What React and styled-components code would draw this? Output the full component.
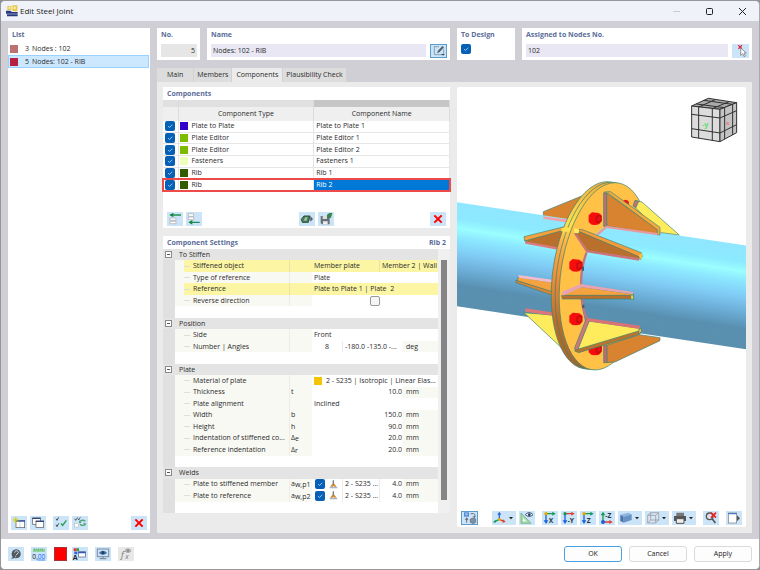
import React from "react";
import styled, { createGlobalStyle, css } from "styled-components";

const GlobalStyle = createGlobalStyle`
  * { box-sizing: border-box; }
  html, body { margin: 0; background: #8f8f94; }
  body, button, input, select, table {
    font-family: "Open Sans", "Noto Sans", sans-serif;
    font-size: 7px;
    line-height: 10px;
    color: #2b2b2b;
  }
  button { padding: 0; border: 0; background: none; }
`;

const Window = styled.div`
  min-height: 100vh;
  display: flex;
  flex-direction: column;
  border: 1px solid #96969b;
  border-right-color: #aaa9af;
  border-radius: 5px;
  background: #d0cfd5;
  overflow: hidden;
`;
const TitleBar = styled.header`
  display: flex;
  align-items: center;
  height: 20px;
  padding: 0 12px 0 5px;
  gap: 2px;
  background: #eff3f9;
`;
const Title = styled.h1`
  flex: 1;
  margin: 0;
  font-size: 8px;
  font-weight: 400;
  color: #222;
`;
const WindowButtons = styled.div`
  display: flex;
  gap: 24px;
  button { width: 9px; height: 9px; display: flex; }
`;
const Body = styled.main`
  flex: 1;
  display: grid;
  grid-template-columns: minmax(0, 142fr) minmax(0, 595fr);
  gap: 7px;
  padding: 7px 7px 6px;
`;
const Card = styled.section`
  background: #fff;
  min-width: 0;
`;
const Heading = styled.h2`
  margin: 0;
  display: flex;
  justify-content: space-between;
  font-size: 7px;
  line-height: 13px;
  font-weight: 700;
  color: #5b6d98;
  padding: 0 4px;
`;
const ListCard = styled(Card)`
  display: flex;
  flex-direction: column;
`;
const List = styled.ul`
  list-style: none;
  margin: 0;
  padding: 1px 1px 0 0;
  flex: 1;
`;
const ListItem = styled.button`
  display: grid;
  grid-template-columns: 8px 8px 1fr;
  align-items: center;
  width: 100%;
  height: 13px;
  padding: 0 1px;
  gap: 3px;
  text-align: left;
  border: 1px solid transparent;
  ${(p) => p.$selected && css`background: #cce8ff; border-color: #99d1ff;`}
`;
const ListNumber = styled.span`
  text-align: right;
`;
const Swatch = styled.span`
  display: inline-block;
  flex: none;
  width: 8px;
  height: 8px;
  background: ${(p) => p.$color};
`;
const Tools = styled.div`
  display: flex;
  align-items: center;
  gap: 3px;
  padding: ${(p) => p.$pad || "3px"};
`;
const Spacer = styled.span`
  flex: ${(p) => (p.$width ? `0 0 ${p.$width}px` : 1)};
`;
const IconButton = styled.button`
  flex: none;
  width: ${(p) => p.$width || 16}px;
  height: 14px;
  display: flex;
  align-items: center;
  justify-content: center;
  background: ${(p) => (p.$disabled ? "#e8e8e8" : "#cce4f7")};
  border: ${(p) => (p.$framed ? "1px solid #5c9ccc" : "0")};
  svg { display: block; width: 16px; height: 14px; flex: none; }
  svg + svg { width: 8px; }
`;
const ColorButton = styled.button`
  width: 13px;
  height: 14px;
  background: #f00;
  border: 1px solid #a33;
`;
const Main = styled.div`
  display: flex;
  flex-direction: column;
  min-width: 0;
`;
const TopRow = styled.div`
  display: grid;
  grid-template-columns: 43px minmax(0, 243fr) 58px minmax(0, 230fr);
  gap: 7px;
`;
const FieldCard = styled(Card)`
  height: 32px;
`;
const FieldRow = styled.div`
  display: flex;
  gap: 4px;
  padding: 3px 3px 0 4px;
`;
const TextField = styled.input`
  flex: 1;
  width: 0;
  min-width: 0;
  height: 13px;
  border: 0;
  padding: 0 2px;
  outline: 0;
  background: ${(p) => (p.readOnly ? "#e6e6e6" : "#e8e7f3")};
  text-align: ${(p) => (p.readOnly ? "right" : "left")};
`;
const Check = styled.input.attrs({ type: "checkbox" })`
  appearance: none;
  flex: none;
  display: block;
  margin: 0;
  width: 10px;
  height: 10px;
  border-radius: 2px;
  border: 1px solid #999;
  background: #f5f5f5;
  &:checked {
    border: 0;
    background: #0560b6 url("data:image/svg+xml,%3Csvg xmlns='http://www.w3.org/2000/svg' viewBox='0 0 10 10'%3E%3Cpath d='M3 5l1.5 1.5L7.2 3.7' fill='none' stroke='%23b8dcff' stroke-width='.8'/%3E%3C/svg%3E");
  }
`;
const Tabs = styled.nav`
  display: flex;
  margin-top: 8px;
`;
const Tab = styled.button`
  height: 14px;
  padding: 0 ${(p) => p.$pad}px;
  background: ${(p) => (p.$active ? "#ebebeb" : "#dddddd")};
  border-right: 1px solid #d2d2d4;
`;
const TabPanel = styled.div`
  flex: 1;
  display: grid;
  grid-template-columns: minmax(0, 287fr) minmax(0, 289fr);
  gap: 7px;
  padding: 5px 6px 6px;
  background: #ebebeb;
`;
const Column = styled.div`
  display: flex;
  flex-direction: column;
  gap: 8px;
  padding-bottom: 14px;
  min-width: 0;
`;
const ComponentTable = styled.table`
  width: 100%;
  height: 91px;
  table-layout: fixed;
  border-collapse: collapse;
  th { background: #efefef; font-weight: 400; height: 14px; padding: 0; border-right: 1px solid #dcdcdc; }
  td { padding: 0 1px; border-bottom: 1px solid #e6e6e6; border-right: 1px solid #e6e6e6; }
  td:first-child, td:last-child { padding-left: 2px; }
  td:nth-child(2) > span { vertical-align: middle; margin-right: 4px; }
`;
const TableStrip = styled.tr`
  th { height: 7px; background: #e0e0e0; }
  th:last-child { background: #c6c6c6; }
`;
const TableRow = styled.tr`
  ${(p) => p.$selected && css`
    outline: 2px solid #ef4a4a;
    outline-offset: -1px;
    td:last-child { background: #0078d7; color: #fff; }
  `}
`;
const SettingsCard = styled(Card)`
  flex: 1;
  display: flex;
  flex-direction: column;
`;
const SettingsBody = styled.div`
  flex: 1;
  display: grid;
  grid-template-columns: minmax(0, 1fr) 12px;
`;
const SettingsTree = styled.div`
  display: flex;
  flex-direction: column;
`;
const Group = styled.div`
  flex: ${(p) => p.$rows} 0 0px;
  display: grid;
  grid-template-columns: 12px minmax(0, 1fr);
  grid-template-rows: repeat(${(p) => p.$rows}, minmax(11px, 1fr));
  background: linear-gradient(90deg, #e0e0e0 12px, #fff 12px);
`;
const GroupTitle = styled.div`
  grid-column: 1 / 3;
  display: flex;
  align-items: center;
  gap: 7px;
  padding-left: 2px;
  background: #e4e4e4;
`;
const Toggle = styled.button`
  width: 7px;
  height: 7px;
  display: flex;
  align-items: center;
  justify-content: center;
  background: #fff;
  border: 1px solid #8a8a8a;
  &::before { content: ""; width: 3px; height: 1px; background: #555; }
`;
const SettingRow = styled.div`
  grid-column: 2;
  display: grid;
  grid-template-columns: 9px minmax(0, 105fr) 23px minmax(0, 126fr);
  align-items: stretch;
  background: #f9f9f4;
  white-space: nowrap;
`;
const Cell = styled.div`
  display: flex;
  align-items: center;
  min-width: 0;
  overflow: hidden;
  background: ${(p) => (p.$hot ? "#fbf5a4" : p.$white ? "#fff" : "#f9f9f4")};
  padding-left: ${(p) => p.$pad || 0}px;
  border-left: ${(p) => (p.$rule ? `1px solid ${p.$hot ? "#e9e4a4" : "#ececea"}` : "0")};
  flex: ${(p) => (p.$width ? `0 0 ${p.$width}px` : 1)};
  justify-content: ${(p) => p.$align || "flex-start"};
`;
const Branch = styled.span`
  width: 6px;
  height: 1px;
  margin-right: 3px;
  background: #dededa;
`;
const Subscript = styled.sub`
  font-size: 7px;
  line-height: 7px;
  padding-top: 1px;
`;
const ValueInput = styled.input`
  width: 100%;
  min-width: 0;
  height: 10px;
  border: 0;
  outline: 0;
  padding: 0;
  background: transparent;
  text-align: ${(p) => p.$align || "left"};
  text-overflow: ellipsis;
`;
const ValueSelect = styled.select`
  appearance: none;
  border: 0;
  padding: 0;
  width: 100%;
  height: 10px;
  background: transparent;
`;
const ScrollTrack = styled.div`
  display: flex;
  justify-content: center;
  padding: 11px 3px 13px;
  background: #f0f0f0;
`;
const ScrollThumb = styled.div`
  flex: 1;
  background: #868686;
`;
const ViewCard = styled(Card)`
  display: flex;
  flex-direction: column;
  border-radius: 2px;
`;
const Canvas = styled.div`
  flex: 1;
  min-height: 300px;
  display: grid;
  svg { width: 100%; height: 100%; display: block; }
`;
const Footer = styled.footer`
  display: flex;
  align-items: center;
  gap: 7px;
  height: 30px;
  padding: 0 7px;
  background: #fff;
`;
const FooterPair = styled.div`
  display: flex;
  gap: 5px;
`;
const DialogButton = styled.button`
  width: 58px;
  height: 16px;
  border-radius: 3px;
  background: #fdfdfd;
  border: 1px solid ${(p) => (p.$primary ? "#4a9fe0" : "#dadada")};
  color: #222;
`;

/* Toolbar glyphs, drawn on a 48 x 42 grid */
const drawings = {
  newItem: <><rect x="15" y="13" width="26" height="22" fill="#fff" stroke="#555" strokeWidth="2" /><path d="M14 15h28" stroke="#3857a8" strokeWidth="5" /><path d="M27 13v22" stroke="#888" /><path d="M14 3v18M5 12h18M8 6l12 12M20 6L8 18" stroke="#d5cf00" strokeWidth="2.5" /></>,
  copyItem: <><rect x="8" y="6" width="23" height="19" fill="#fff" stroke="#555" strokeWidth="2" /><path d="M7 7h25" stroke="#33447f" strokeWidth="4" /><rect x="18" y="15" width="23" height="19" fill="#fff" stroke="#555" strokeWidth="2" /><path d="M17 16h25" stroke="#33447f" strokeWidth="4" /></>,
  checks: <><path d="M9 8l3 5 5-9M9 26l3 6 5-10" fill="none" stroke="#333" strokeWidth="2.5" /><path d="M24 22l5 6 11-15" fill="none" stroke="#20a052" strokeWidth="4" /></>,
  swap: <><path d="M8 8l3 5 6-9M18 8l2 4 5-8" fill="none" stroke="#444" strokeWidth="2.5" /><rect x="8" y="22" width="11" height="11" fill="#fff" stroke="#999" /><path d="M40 16c-6-5-13-4-16 1M24 25c5 5 12 4 15 0" fill="none" stroke="#4fa374" strokeWidth="4" /><path d="M21 13v8h8zM41 29v-8h-8z" fill="#4fa374" /></>,
  remove: <path d="M13 10l22 22M35 10L13 32" stroke="#f00" strokeWidth="6" />,
  help: <><path d="M14 30l-5 6 10-3c14 3 22-5 18-17C34 4 17 4 12 15c-2 6-1 11 2 15z" fill="#53585f" /><path d="M20 17c0-8 12-7 11 0-1 4-6 4-7 8M23 28v3" fill="none" stroke="#cce4f7" strokeWidth="3" /></>,
  units: <><path d="M6 5h36v10H6z" fill="#8fd39b" /><path d="M10 5v6M16 5v4M22 5v6M28 5v4M34 5v6" stroke="#4b9c61" strokeWidth="2" /><text x="4" y="35" fontSize="20" fill="#222">0,</text><text x="20" y="35" fontSize="20" fill="#1769ff">00</text><path d="M20 39h22" stroke="#1769ff" strokeWidth="2" /></>,
  colors: <><path d="M5 4h9v9H5z" fill="#e33" /><path d="M14 4h7v9h-7z" fill="#27a047" /><path d="M7 14h9v8H7z" fill="#2d60e8" /><text x="2" y="39" fontSize="21" fontWeight="700" fill="#222">A</text><rect x="20" y="15" width="20" height="15" fill="#fff" stroke="#557" strokeWidth="2" /><path d="M19 16h22" stroke="#3857a8" strokeWidth="5" /></>,
  view: <><rect x="7" y="6" width="34" height="23" fill="#cfe0f2" stroke="#7b8da4" strokeWidth="3" /><path d="M14 35h20M24 29v6" stroke="#7b8da4" strokeWidth="4" /><path d="M12 18c7-9 16-9 24 0-8 7-17 7-24 0z" fill="#426fa1" /><circle cx="24" cy="17" r="4" fill="#173c66" /></>,
  formula: <><text x="9" y="32" fontSize="27" fontStyle="italic" fill="#777">f</text><text x="22" y="36" fontSize="21" fontStyle="italic" fill="#777">x</text><ellipse cx="30" cy="11" rx="8" ry="5" fill="#ccc" stroke="#777" strokeWidth="2" /><circle cx="30" cy="11" r="3" fill="#777" /></>,
  edit: <><path d="M10 8h14M10 7v25h28M38 14v18" fill="none" stroke="#61809d" strokeWidth="2" /><path d="M18 28l3-8L34 6l5 4-14 15z" fill="#555e67" /><path d="M32 32h8" stroke="#333" strokeWidth="3" /></>,
  pick: <><path d="M16 4l11 10M27 4L16 14" stroke="#df2d39" strokeWidth="4" /><path d="M23 12v22l6-5 4 9 4-2-4-9h7z" fill="#fff" stroke="#666" strokeWidth="2" /></>,
  insertAbove: <><path d="M11 9h31" stroke="#209050" strokeWidth="4" /><path d="M7 9l12-7v14z" fill="#168440" /><path d="M9 18h18v7H9zM9 28h18v7H9z" fill="#fff" stroke="#aaa" strokeWidth="2" /></>,
  insertBelow: <><path d="M7 5h16v8H7zM7 15h16v8H7z" fill="#fff" stroke="#aaa" strokeWidth="2" /><path d="M12 31h29" stroke="#209050" strokeWidth="4" /><path d="M7 31l12-7v14z" fill="#168440" /></>,
  library: <><path d="M7 22l8-10h18l-5 19H10z" fill="#4f7c5d" stroke="#294e38" strokeWidth="3" /><path d="M14 25l5-9h7l-4 11z" fill="#9bc6a4" /><path d="M34 13v16l8-8z" fill="#4e5961" /></>,
  save: <><path d="M8 12h27v25H12l-4-4z" fill="#68717a" /><path d="M14 12h13v9H14z" fill="#ddd" /><path d="M15 28h14v9H15z" fill="#eee" /><path d="M27 8l7-5h9l-4 14-11 2z" fill="#39814d" /></>,
  sync: <><rect x="6" y="4" width="15" height="13" fill="#5187d6" /><path d="M10 7h7v6h-7z" fill="#a9c8f0" /><path d="M14 22v13M26 8h9c5 2 5 6 2 10" fill="none" stroke="#666f7d" strokeWidth="3" /><path d="M8 26l6-7 6 7zM32 16l5 6 5-6z" fill="#666f7d" /><path d="M25 24l8-3 8 3v10l-8 4-8-4z" fill="#8090a6" stroke="#5d6878" strokeWidth="2" /></>,
  axes: <><path d="M22 25V8" stroke="#2864df" strokeWidth="4" /><path d="M22 25L8 32" stroke="#15a050" strokeWidth="4" /><path d="M22 25l14 6" stroke="#e24229" strokeWidth="4" /><path d="M16 11l6-9 6 9z" fill="#2864df" /><path d="M11 26v9l-8-1z" fill="#17945b" /><path d="M34 25l7 8-10 2z" fill="#e24229" /><circle cx="22" cy="25" r="4" fill="#e1b500" /></>,
  measure: <><path d="M6 6v31h30z" fill="#a9dbab" stroke="#5aa773" strokeWidth="2" /><path d="M12 21v10h10z" fill="#fff" /><path d="M19 11c7-8 16-8 23 0-7 7-16 7-23 0z" fill="#fff" stroke="#334d78" strokeWidth="3" /><circle cx="31" cy="11" r="4" fill="#26375c" /></>,
  cubeBlue: <><path d="M7 11l24-6 10 5-24 7z" fill="#8fb5df" /><path d="M7 11l10 6v18L7 30z" fill="#4a75ab" /><path d="M17 17l24-7v17l-24 8z" fill="#6a92c4" /></>,
  wire: <path d="M8 13l9-8h24v22l-9 9H8zM8 13h24v23M32 13l9-8M17 5v22h24M17 27l-9 9" fill="#dce5ef" stroke="#8791a0" strokeWidth="2" />,
  print: <><path d="M13 5h23v10H13z" fill="#777" /><path d="M6 15h36v15H6z" fill="#555" /><path d="M13 23h23v14H13z" fill="#eee" stroke="#555" strokeWidth="3" /></>,
  find: <><circle cx="20" cy="16" r="10" fill="#d9e2ea" stroke="#555" strokeWidth="4" /><path d="M28 24l9 12" stroke="#555" strokeWidth="5" /><path d="M24 5l15 15M39 5L24 20" stroke="#e22" strokeWidth="5" /></>,
  panel: <><rect x="7" y="6" width="25" height="30" fill="#fff" stroke="#777" strokeWidth="2" /><path d="M7 8h25" stroke="#4879c5" strokeWidth="4" /><path d="M33 13v18l9-9z" fill="#555" /></>,
};
const axisView = (letter, horizontal, vertical, origin) => (
  <>
    <path d="M12 8v24" stroke={vertical} strokeWidth="4" />
    <path d="M12 8h21" stroke={horizontal} strokeWidth="4" />
    <path d="M31 2l10 6-10 6z" fill={horizontal} />
    <path d="M5 28l7 11 7-11z" fill={vertical} />
    <circle cx="12" cy="8" r="5" fill={origin} />
    <text x="20" y="35" fontSize="20" fontWeight="700" fill="#263541">{letter}</text>
  </>
);
drawings.viewX = axisView("X", "#169856", "#1764dc", "#e5a800");
drawings.viewY = axisView("-Y", "#e33b32", "#1764dc", "#169856");
drawings.viewZ = axisView("Z", "#169856", "#1764dc", "#e5a800");
drawings.viewMinusZ = <>
  <path d="M12 9v24" stroke="#169856" strokeWidth="4" />
  <path d="M12 33h20" stroke="#e33b32" strokeWidth="4" />
  <path d="M5 13l7-11 7 11z" fill="#169856" /><path d="M31 27l10 6-10 6z" fill="#e33b32" /><circle cx="12" cy="33" r="6" fill="#1764dc" />
  <text x="19" y="22" fontSize="20" fontWeight="700" fill="#263541">-Z</text>
</>;

function Tool({ icon, label, menu, width, framed, disabled }) {
  return (
    <IconButton type="button" aria-label={label} $width={menu ? 24 : width} $framed={framed} $disabled={disabled}>
      <svg viewBox="0 0 48 42">{drawings[icon]}</svg>
      {menu && <svg viewBox="0 0 24 42"><path d="M3 18h12l-6 7z" fill="#222" /></svg>}
    </IconButton>
  );
}

function Bolt({ x, y }) {
  return (
    <g transform={`translate(${x} ${y})`}>
      <path d="M-19-10l10-9 20 2 9 7v18l-8 9-10 2-12-1-9-8z" fill="#f80d0d" />
      <path d="M2-6l9-6 9 4v15l-8 7-10-2z" fill="#cc0b0b" />
      <path d="M7-3l6-4 4 3v8l-5 4-5-2z" fill="#e81515" />
    </g>
  );
}

function Model() {
  const edge = { stroke: "#3a8274", strokeWidth: 2, strokeLinejoin: "round" };
  const disc = (dx) => `matrix(134 0 -30 281 ${450 + dx} ${319 + dx / 8})`;
  return (
    <svg viewBox="457 87 289 424" preserveAspectRatio="xMidYMid slice" role="img" aria-label="Steel joint model">
      <defs>
        <linearGradient id="pipe" gradientUnits="userSpaceOnUse" x1="440" y1="162" x2="394" y2="466">
          <stop offset="0" stopColor="#8fe6ff" />
          <stop offset=".16" stopColor="#8ceaff" />
          <stop offset=".25" stopColor="#9bfeff" />
          <stop offset=".34" stopColor="#8ce8ff" />
          <stop offset=".5" stopColor="#7fcaf5" />
          <stop offset=".66" stopColor="#6aabd4" />
          <stop offset=".8" stopColor="#5990b1" />
          <stop offset="1" stopColor="#5a8fae" />
        </linearGradient>
        <linearGradient id="rim" x1="0" y1="0" x2="0" y2="1">
          <stop offset="0" stopColor="#f2ad3d" />
          <stop offset=".22" stopColor="#ffe04e" />
          <stop offset=".32" stopColor="#ffb347" />
          <stop offset=".5" stopColor="#ee9038" />
          <stop offset=".75" stopColor="#b96d2a" />
          <stop offset="1" stopColor="#a8652a" />
        </linearGradient>
      </defs>
      <g transform="translate(455 170) scale(.3333)">
        <path d="M265 125L400 70 360 155 265 141z" fill="#d78330" {...edge} />
        <path d="M6 97L480 168V480L6 409z" fill="url(#pipe)" />
        <path d="M265 139l80 11v9l-80-13z" fill="#f3a0a8" />
        <path d="M210 212l120-34-20 58-98-21z" fill="#b9702c" {...edge} />
        <path d="M207 200l122-30v10l-120 33z" fill="#f8a13b" {...edge} />
        <path d="M210 214l98 18v7l-97-18z" fill="#dd7a7c" />
        <path d="M190 321l108 17v32l-112-38z" fill="#f5a33e" {...edge} />
        <path d="M183 331l112 35v11l-112-39z" fill="#dc8533" {...edge} />
        <path d="M190 315l108 15v9l-106-16z" fill="#f1bccd" />
        <path d="M207 428l94 8 34 112z" fill="#ffec5c" {...edge} />
        <path d="M211 415l88 13v10l-88-13z" fill="#db777b" />
        {[-24, -12].map((dx) => (
          <circle key={dx} r="1" transform={disc(dx)} fill="url(#rim)" stroke="#3a8274" strokeWidth="1" vectorEffect="non-scaling-stroke" strokeOpacity=".7" />
        ))}
        <circle r="1" transform={disc(0)} fill="#ffc247" stroke="#3a8274" strokeWidth="1" vectorEffect="non-scaling-stroke" strokeOpacity=".7" />
        <path d="M320 175l12-4 16 3-6 12-24-2z" fill="#ffe04e" />
        <path d="M502 95q10-11 20 0l-1 9z" fill="#f21818" />
        <path d="M420 193l36-29L874 227V538L395 466C384 440 378 400 378 350s10-98 42-157z" fill="url(#pipe)" />
        <path d="M395 247c-12 30-17 65-17 98M380 385c2 28 8 46 17 65" fill="none" stroke="#c2757c" strokeWidth="7" />
        <path d="M384 290v12M385 404v10" stroke="#3a5c70" strokeWidth="6" />
        <path d="M543 93l18 3 112 99-55-7-78-76z" fill="#ffec5c" {...edge} />
        <path d="M540 91l11 3-8 19-9-5z" fill="#c1737a" {...edge} />
        <Bolt x={420} y={146} />
        <path d="M452 68l156 109 1 16-154-25z" fill="#d78330" {...edge} />
        <path d="M447 66l20-1 148 107v23l-8-1v-15L460 70h-12z" fill="#f6aa3d" {...edge} />
        <path d="M446 69h9v101l-9-1z" fill="#b8737c" {...edge} />
        <path d="M454 167l154 22v7l-153-22-25 22-8-3z" fill="#e9989c" />
        <path d="M360 191l22-6 174 75-3 7-156-24z" fill="#b9702c" {...edge} />
        <path d="M367 179l13-1 179 70 3 11-6 10-4-9-174-73z" fill="#f59b3a" {...edge} />
        <path d="M552 255l10-6-1 13-6 7z" fill="#f5c43e" />
        <path d="M356 190l8 1 35 50 153 23v8l-158-25z" fill="#cc747b" />
        <path d="M357 175l15 3-1 12-13-1z" fill="#ffec5c" />
        <path d="M325 373l53-23 157 22v6H325z" fill="#f5a33e" {...edge} />
        <path d="M320 376h215v11H322z" fill="#b9702c" {...edge} />
        <path d="M527 375h9v13h-9z" fill="#f5cb45" {...edge} />
        <path d="M321 365l56-23 157 24v7l-154-21-57 25z" fill="#e8a3b0" />
        <Bolt x={362} y={286} />
        <Bolt x={362} y={447} />
        <Bolt x={420} y={537} />
        <path d="M455 526l98-32 62 9v9L480 576l-25 2z" fill="#d78330" {...edge} />
        <path d="M446 527h10v51h-10z" fill="#b96e75" {...edge} />
        <path d="M363 536l192-60 4 8-5 9-183 55-12-5z" fill="#ba742d" {...edge} />
        <path d="M400 453l154 22-3 8-183 55z" fill="#ffec5c" {...edge} />
        <path d="M394 445l9 8-35 87-10-4z" fill="#cf787b" {...edge} />
        <path d="M394 443l161 24-1 10-154-23z" fill="#d87478" />
        <path d="M551 482l9-9-1 11-6 8z" fill="#f5cb45" {...edge} />
      </g>
      <g transform="translate(450 0) scale(.3333)" stroke="#303030" strokeWidth="3" strokeLinejoin="round">
        <path d="M725 318l50-23 85 13-50 20z" fill="#aaa" />
        <path d="M725 318l85 10v97l-85-14z" fill="#dcdcdc" />
        <path d="M810 328l50-20v90l-50 27z" fill="#c4c4c4" />
        <path d="M725 343l85 11 50-22M725 386l85 13 50-25M746 321v94M787 326v96M824 322v95M848 313v92M739 312l84 11M761 301l86 12M746 321l50-22M787 326l50-21" fill="none" />
        <text x="756" y="382" fontSize="22" fontWeight="700" fill="#5fe070" stroke="none">-y</text>
        <text x="828" y="375" fontSize="18" fontWeight="700" fill="#e77b7b" stroke="none">x</text>
      </g>
    </svg>
  );
}

const components = [
  ["Plate to Plate", "Plate to Plate 1", "#3300cc"],
  ["Plate Editor", "Plate Editor 1", "#7dbb00"],
  ["Plate Editor", "Plate Editor 2", "#7dbb00"],
  ["Fasteners", "Fasteners 1", "#eeffbb"],
  ["Rib", "Rib 1", "#335c00"],
  ["Rib", "Rib 2", "#335c00"],
];

const groups = [
  { title: "To Stiffen", rows: [
    { label: "Stiffened object", hot: true, text: "Member plate", extra: "Member 2 | Wall" },
    { label: "Type of reference", select: "Plate" },
    { label: "Reference", hot: true, text: "Plate to Plate 1 | Plate  2" },
    { label: "Reverse direction", check: true },
  ] },
  { title: "Position", rows: [
    { label: "Side", select: "Front" },
    { label: "Number | Angles", count: "8", angles: "-180.0 -135.0 -...", unit: "deg" },
  ] },
  { title: "Plate", rows: [
    { label: "Material of plate", color: "#f5c400", text: "2 - S235 | Isotropic | Linear Elast..." },
    { label: "Thickness", symbol: "t", number: "10.0", unit: "mm" },
    { label: "Plate alignment", select: "Inclined" },
    { label: "Width", symbol: "b", number: "150.0", unit: "mm" },
    { label: "Height", symbol: "h", number: "90.0", unit: "mm" },
    { label: "Indentation of stiffened co...", symbol: "Δ", sub: "e", number: "20.0", unit: "mm" },
    { label: "Reference indentation", symbol: "Δ", sub: "r", number: "20.0", unit: "mm" },
  ] },
  { title: "Welds", rows: [
    { label: "Plate to stiffened member", symbol: "a", sub: "w,p1", weld: "2 - S235 ...", number: "4.0", unit: "mm" },
    { label: "Plate to reference", symbol: "a", sub: "w,p2", weld: "2 - S235 ...", number: "4.0", unit: "mm" },
  ] },
];

const Values = styled.div`
  display: flex;
  min-width: 0;
`;
const WeldIcon = styled.svg`
  width: 9px;
  height: 9px;
  margin-left: 4px;
`;

function Value({ row }) {
  const { label, hot } = row;
  return (
    <Values>
      {row.text && (
        <Cell $white $hot={hot} $pad={2}>
          {row.color && <><Swatch $color={row.color} /><Spacer $width={4} /></>}
          <ValueInput aria-label={label} defaultValue={row.text} />
        </Cell>
      )}
      {row.extra && <Cell $hot={hot} $rule $pad={2} $width={59}><ValueInput aria-label={`${label} detail`} defaultValue={row.extra} /></Cell>}
      {row.select && <Cell $white $pad={2}><ValueSelect aria-label={label}><option>{row.select}</option></ValueSelect></Cell>}
      {row.check && <Cell $white $align="center"><Check aria-label={label} /></Cell>}
      {row.count && <Cell $white $width={30}><ValueInput $align="center" aria-label="Number" defaultValue={row.count} /></Cell>}
      {row.angles && <Cell $white $rule $pad={2}><ValueInput aria-label="Angles" defaultValue={row.angles} /></Cell>}
      {row.weld && (
        <>
          <Cell $white $pad={3} $width={30}>
            <Check defaultChecked aria-label={label} />
            <WeldIcon viewBox="0 0 27 27">
              <path d="M13 1v16" stroke="#6d7f92" strokeWidth="4" />
              <path d="M12 9v11H3zM14 9v11h9z" fill="#d78b2d" />
              <path d="M2 23h23" stroke="#a4b9d0" strokeWidth="4" />
            </WeldIcon>
          </Cell>
          <Cell $white $rule $pad={2}><ValueInput aria-label={`${label} material`} defaultValue={row.weld} /></Cell>
        </>
      )}
      {row.number && <Cell $white $rule={!!row.weld} $width={row.weld ? 23 : undefined}><ValueInput $align="right" aria-label={`${label} size`} defaultValue={row.number} /></Cell>}
      {row.unit && <Cell $pad={4} $width={36}>{row.unit}</Cell>}
    </Values>
  );
}

function Settings() {
  return (
    <SettingsCard>
      <Heading>Component Settings<span>Rib 2</span></Heading>
      <SettingsBody>
        <SettingsTree>
          {groups.map((g) => (
            <Group key={g.title} $rows={g.rows.length + 2}>
              <GroupTitle><Toggle type="button" aria-label={`Collapse ${g.title}`} />{g.title}</GroupTitle>
              {g.rows.map((row) => (
                <SettingRow key={row.label}>
                  <span />
                  <Cell $hot={row.hot}><Branch />{row.label}</Cell>
                  <Cell $hot={row.hot} $rule $pad={1}>{row.symbol}{row.sub && <Subscript>{row.sub}</Subscript>}</Cell>
                  <Value row={row} />
                </SettingRow>
              ))}
            </Group>
          ))}
        </SettingsTree>
        <ScrollTrack><ScrollThumb /></ScrollTrack>
      </SettingsBody>
    </SettingsCard>
  );
}

export default function App() {
  return (
    <>
      <GlobalStyle />
      <Window>
        <TitleBar>
          <svg width="12" height="12" viewBox="0 0 36 36" aria-hidden="true">
            <path d="M4 3h12v12H4zM19 1h15v18H19z" fill="#e8c84b" />
            <path d="M8 6h5v5H8zM23 5h6v7h-6z" fill="#fff3b0" />
            <path d="M0 17h13l5 4h17v5H0zM3 28h32v6H3z" fill="#26397f" />
          </svg>
          <Title>Edit Steel Joint</Title>
          <WindowButtons>
            <button type="button" aria-label="Minimize"><svg viewBox="0 0 9 9"><path d="M1 4.5h7" stroke="#c8ccd2" /></svg></button>
            <button type="button" aria-label="Maximize"><svg viewBox="0 0 9 9"><rect x="1.5" y="1.5" width="6" height="6" rx="1" fill="none" stroke="#222" /></svg></button>
            <button type="button" aria-label="Close"><svg viewBox="0 0 9 9"><path d="M1 1l7 7M8 1L1 8" stroke="#222" /></svg></button>
          </WindowButtons>
        </TitleBar>
        <Body>
          <ListCard>
            <Heading>List</Heading>
            <List>
              <li><ListItem type="button"><Swatch $color="#bd7272" /><ListNumber>3</ListNumber>Nodes : 102</ListItem></li>
              <li><ListItem type="button" $selected><Swatch $color="#b52042" /><ListNumber>5</ListNumber>Nodes: 102 - RIB</ListItem></li>
            </List>
            <Tools>
              <Tool icon="newItem" label="New" />
              <Tool icon="copyItem" label="Copy" />
              <Spacer $width={1} />
              <Tool icon="checks" label="Select all" />
              <Tool icon="swap" label="Invert selection" />
              <Spacer />
              <Tool icon="remove" label="Delete" />
            </Tools>
          </ListCard>
          <Main>
            <TopRow>
              <FieldCard>
                <Heading as="label" htmlFor="number">No.</Heading>
                <FieldRow><TextField id="number" readOnly value="5" /></FieldRow>
              </FieldCard>
              <FieldCard>
                <Heading as="label" htmlFor="name">Name</Heading>
                <FieldRow><TextField id="name" defaultValue="Nodes: 102 - RIB" /><Tool icon="edit" label="Edit name" framed width={17} /></FieldRow>
              </FieldCard>
              <FieldCard>
                <Heading as="label" htmlFor="design">To Design</Heading>
                <FieldRow><Check id="design" defaultChecked /></FieldRow>
              </FieldCard>
              <FieldCard>
                <Heading as="label" htmlFor="nodes">Assigned to Nodes No.</Heading>
                <FieldRow><TextField id="nodes" defaultValue="102" /><Tool icon="pick" label="Pick nodes" width={17} /></FieldRow>
              </FieldCard>
            </TopRow>
            <Tabs>
              <Tab type="button" $pad={10}>Main</Tab>
              <Tab type="button" $pad={3}>Members</Tab>
              <Tab type="button" $pad={4} $active>Components</Tab>
              <Tab type="button" $pad={3}>Plausibility Check</Tab>
            </Tabs>
            <TabPanel>
              <Column>
                <Card>
                  <Heading>Components</Heading>
                  <ComponentTable>
                    <colgroup><col width="15" /><col /><col /></colgroup>
                    <thead>
                      <TableStrip><th /><th /><th /></TableStrip>
                      <tr><th /><th>Component Type</th><th>Component Name</th></tr>
                    </thead>
                    <tbody>
                      {components.map(([type, name, color]) => (
                        <TableRow key={name} $selected={name === "Rib 2"}>
                          <td><Check defaultChecked aria-label={name} /></td>
                          <td><Swatch $color={color} />{type}</td>
                          <td>{name}</td>
                        </TableRow>
                      ))}
                    </tbody>
                  </ComponentTable>
                  <Tools $pad="21px 4px 2px">
                    <Tool icon="insertAbove" label="Insert above" />
                    <Tool icon="insertBelow" label="Insert below" />
                    <Spacer />
                    <Tool icon="library" label="Load from library" />
                    <Tool icon="save" label="Save to library" />
                    <Spacer />
                    <Tool icon="remove" label="Delete component" />
                  </Tools>
                </Card>
                <Settings />
              </Column>
              <ViewCard>
                <Canvas><Model /></Canvas>
                <Tools $pad="0 4px 2px">
                  <Tool icon="sync" label="Synchronize" framed width={17} />
                  <Spacer />
                  <Tool icon="axes" label="Axes" menu />
                  <Tool icon="measure" label="Measure" />
                  <Spacer $width={1} />
                  <Tool icon="viewX" label="View X" />
                  <Tool icon="viewY" label="View -Y" />
                  <Tool icon="viewZ" label="View Z" />
                  <Tool icon="viewMinusZ" label="View -Z" />
                  <Tool icon="cubeBlue" label="Display" menu />
                  <Tool icon="wire" label="Wireframe" menu />
                  <Tool icon="print" label="Print" menu />
                  <Spacer $width={1} />
                  <Tool icon="find" label="Reset zoom" />
                  <Spacer $width={1} />
                  <Tool icon="panel" label="Toggle panel" />
                </Tools>
              </ViewCard>
            </TabPanel>
          </Main>
        </Body>
        <Footer>
          <Tool icon="help" label="Help" />
          <Tool icon="units" label="Units" />
          <FooterPair>
            <ColorButton type="button" aria-label="Color" />
            <Tool icon="colors" label="Colors" />
          </FooterPair>
          <Tool icon="view" label="Visibility" />
          <Tool icon="formula" label="Formula" disabled />
          <Spacer />
          <DialogButton type="button" $primary>OK</DialogButton>
          <DialogButton type="button">Cancel</DialogButton>
          <DialogButton type="button">Apply</DialogButton>
        </Footer>
      </Window>
    </>
  );
}
